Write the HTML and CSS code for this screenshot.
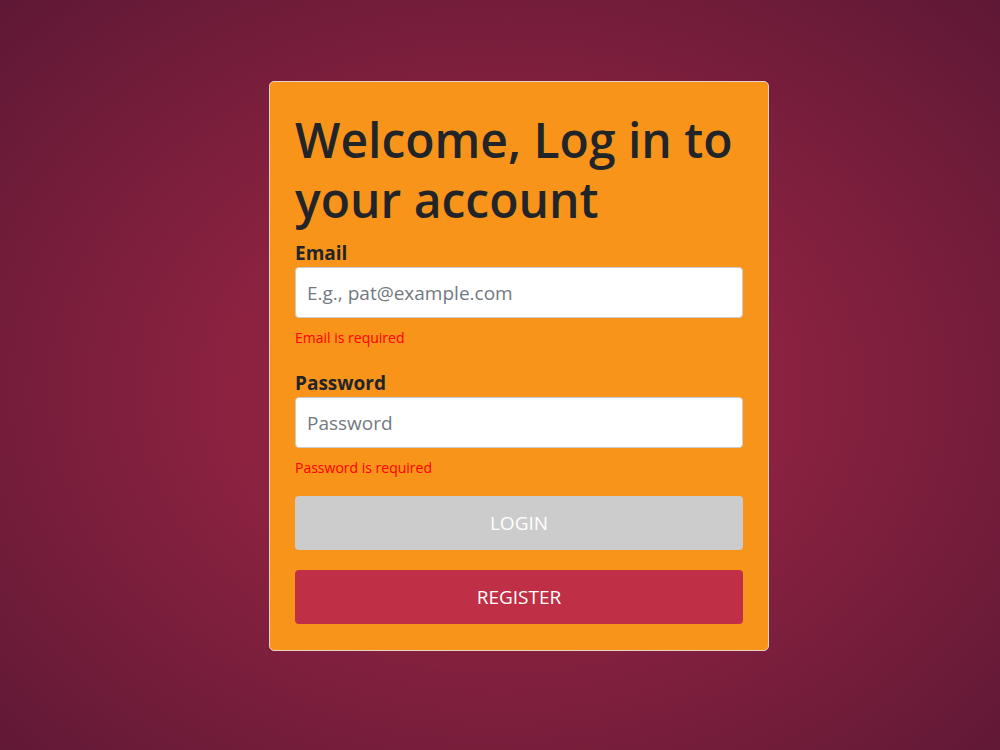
FILE: index.html
```html
<!DOCTYPE html>
<html lang="en">
<head>
<meta charset="utf-8">
<title>Log in</title>
<link rel="stylesheet" href="styles.css">
</head>
<body>
<main class="page">
  <form class="card" novalidate>
    <h1 class="title">Welcome, Log in to your account</h1>
    <div class="field">
      <label class="label" for="email">Email</label>
      <input class="input" id="email" type="email" placeholder="E.g., pat@example.com">
      <div class="error">Email is required</div>
    </div>
    <div class="field">
      <label class="label" for="password">Password</label>
      <input class="input" id="password" type="password" placeholder="Password">
      <div class="error">Password is required</div>
    </div>
    <button class="btn btn-login" type="submit" disabled>LOGIN</button>
    <button class="btn btn-register" type="button">REGISTER</button>
  </form>
</main>
</body>
</html>
```
FILE: styles.css
```css
* { box-sizing: border-box; }

html, body {
  margin: 0;
  height: 100%;
}

body {
  font-family: "Open Sans", "Noto Sans", sans-serif;
  color: #212529;
  background: radial-gradient(ellipse at 50% 52%, #9d2543 0%, #8a2240 40%, #5e1835 100%);
}

.page {
  display: flex;
  justify-content: flex-start;
  padding: 81px 0 0 269px;
}

.card {
  width: 500px;
  background: #f9941a;
  border: 1px solid #e8d2c6;
  border-radius: 5px;
  padding: 28px 25px 26px;
  display: flex;
  flex-direction: column;
}

.title {
  margin: 0 0 10px;
  font-size: 48px;
  font-weight: 600;
  line-height: 60px;
}

.field {
  display: flex;
  flex-direction: column;
  margin-bottom: 20px;
}

.field + .field {
  margin-top: 4px;
}

.label {
  font-size: 19px;
  font-weight: 700;
  line-height: 26px;
  margin-bottom: 1px;
}

.input {
  height: 51px;
  border: 1px solid #c9cdd2;
  border-radius: 4px;
  padding: 0 11px;
  font-family: inherit;
  font-size: 19px;
  color: #495057;
  background: #fff;
}

.input::placeholder {
  color: #727980;
}

.error {
  margin-top: 12px;
  font-size: 14px;
  line-height: 16px;
  color: #ff0000;
}

.btn {
  height: 54px;
  border: none;
  border-radius: 4px;
  font-family: inherit;
  font-size: 19px;
  color: #fff;
}

.btn-login {
  background: #cccccc;
  margin-bottom: 20px;
}

.btn-register {
  background: #bf2f45;
}
```
